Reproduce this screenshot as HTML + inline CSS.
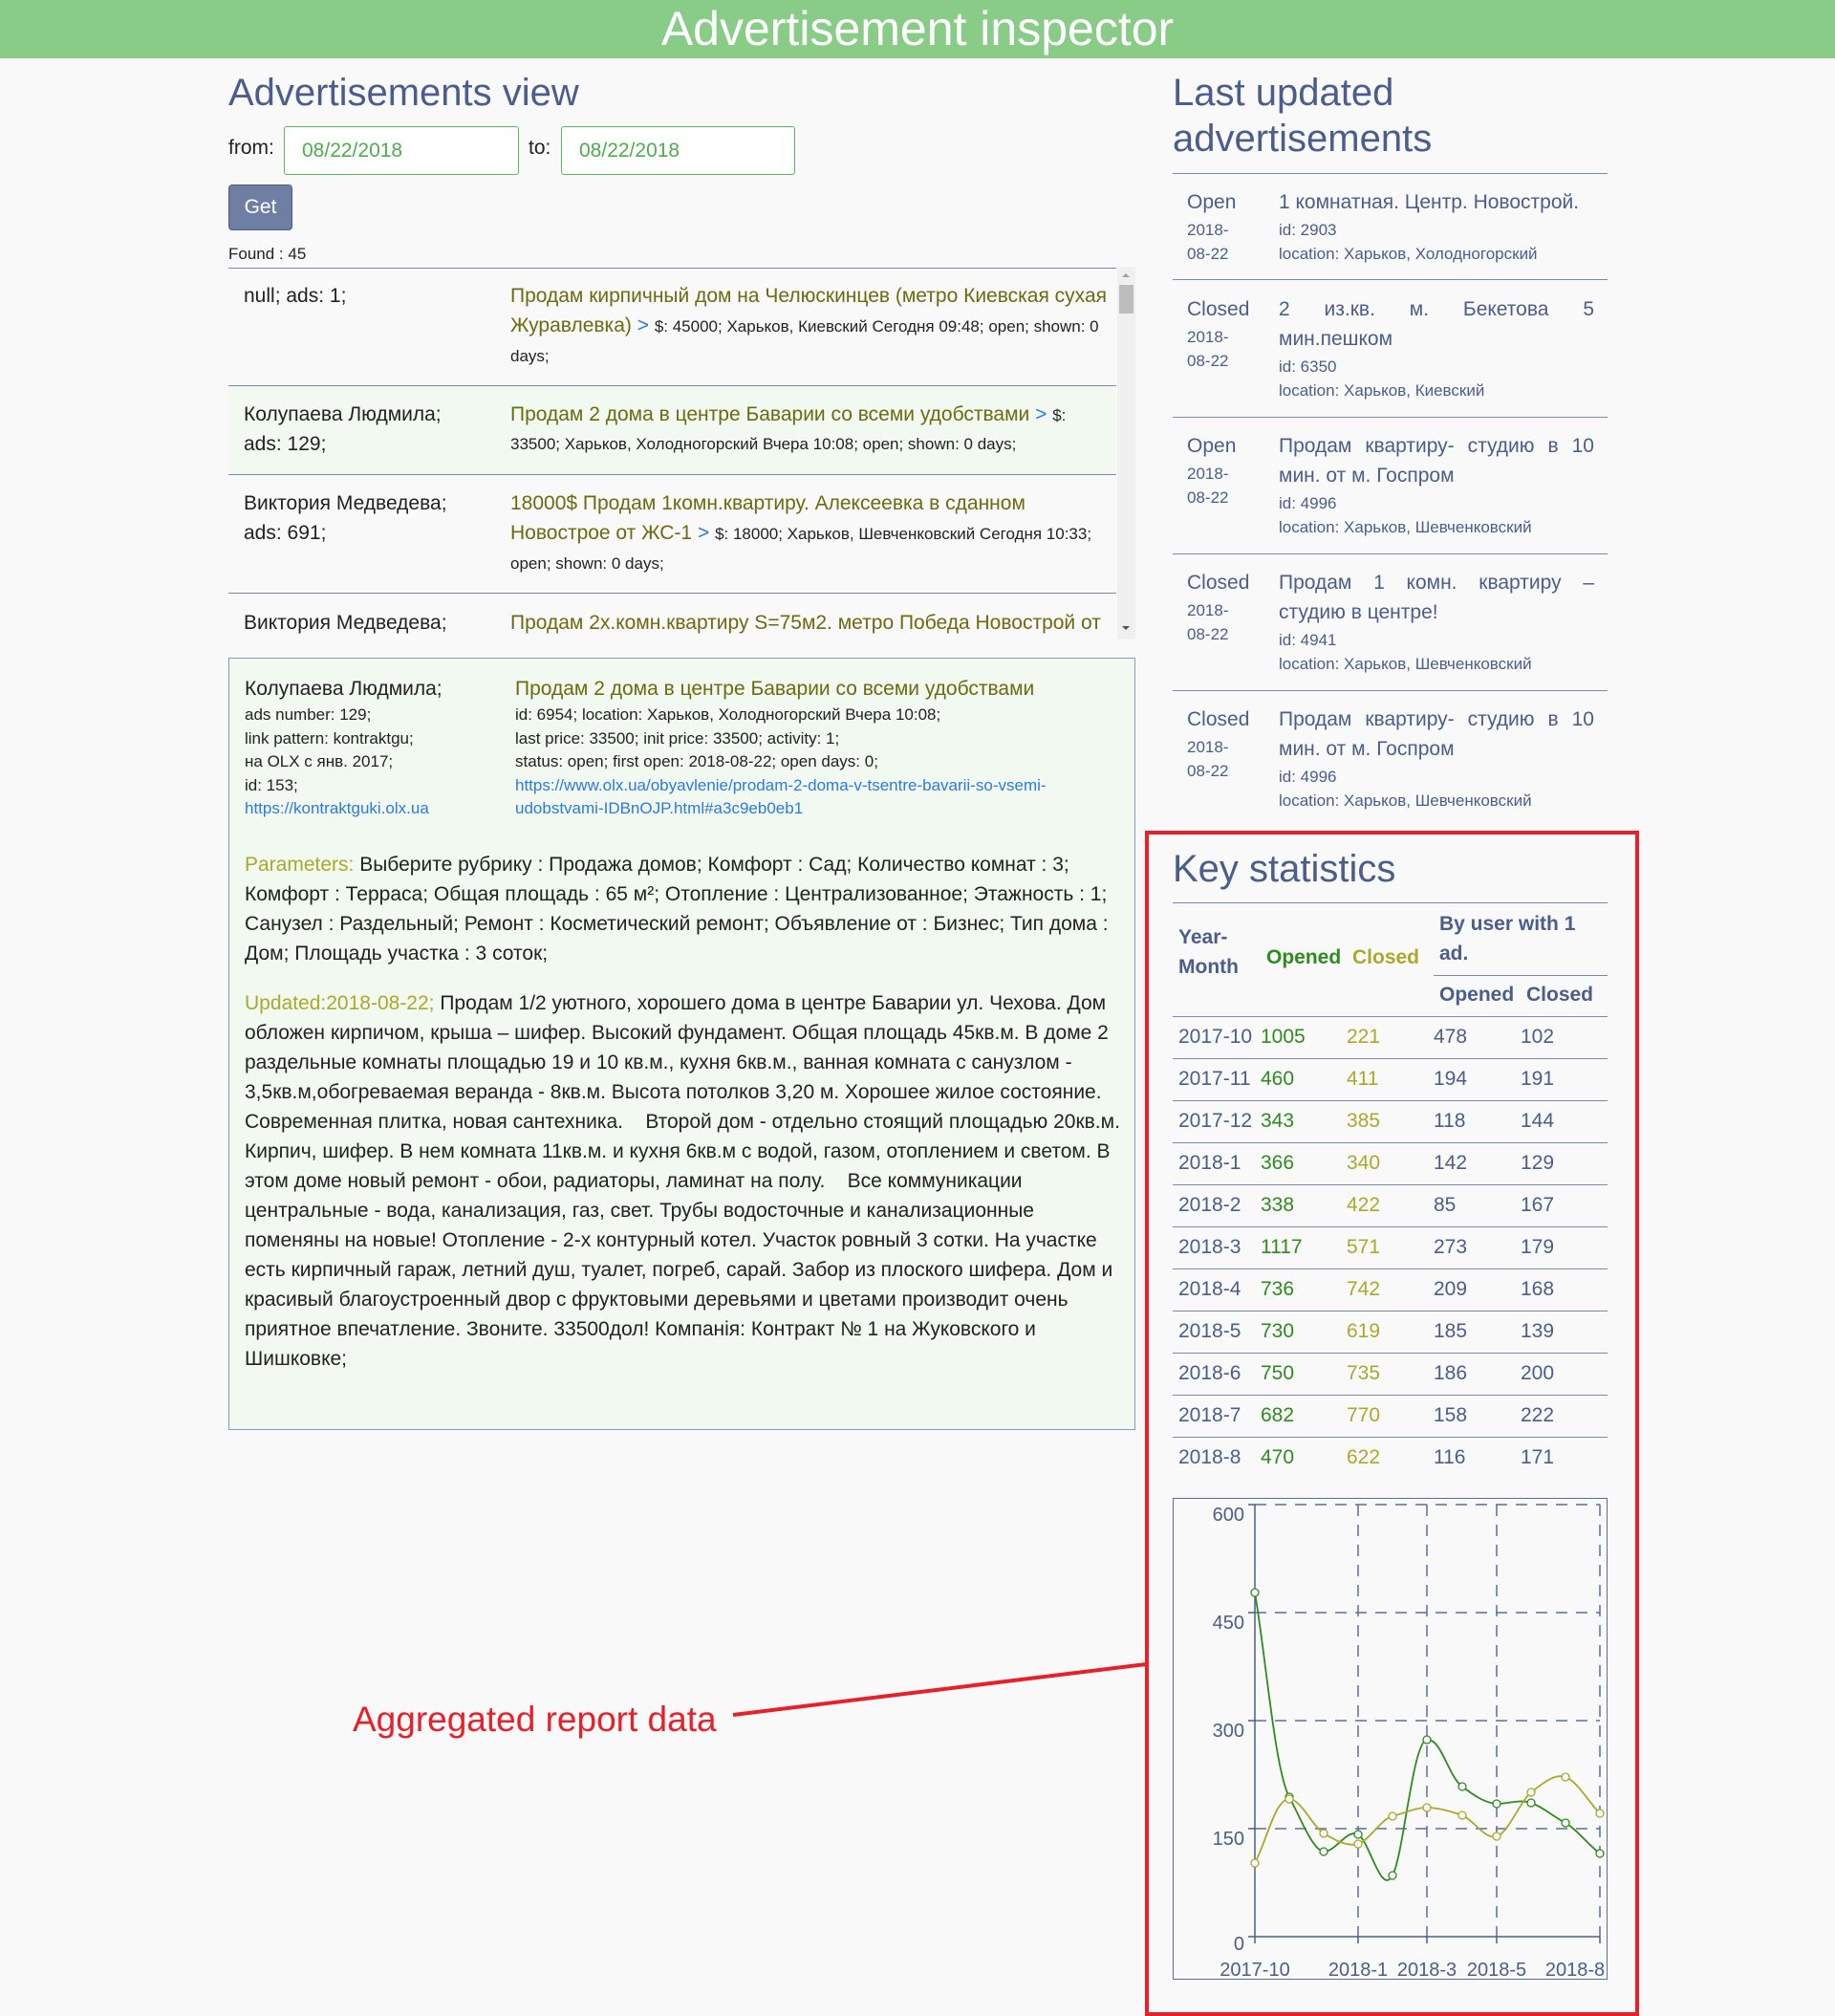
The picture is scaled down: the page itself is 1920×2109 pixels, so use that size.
<!DOCTYPE html>
<html><head><meta charset="utf-8">
<style>
*{margin:0;padding:0;box-sizing:border-box}
body{width:1920px;height:2092px;background:#f9f9f9;font-family:"Liberation Sans",Arial,sans-serif;color:#222;position:relative;overflow:hidden}
.a{position:absolute;white-space:nowrap}
.hdr{left:0;top:0;width:1920px;height:61px;background:#88cc88;color:#fff;font-size:50px;text-align:center;line-height:61px}
h2{position:absolute;font-weight:normal;color:#4b5d8c;font-size:40px;line-height:48px;white-space:nowrap}
.inp{position:absolute;border:1px solid #5cb85c;border-radius:3px;background:#fff;color:#4cae4c;font-size:21px;padding-left:18px;line-height:49px;height:51px}
.l{position:absolute;line-height:31px;font-size:21px;white-space:nowrap}
.s{font-size:17px}
.ol{color:#6b6b10}
.bl{color:#2a7ae2}
.hr{position:absolute;height:1px;background:#7b8bb0}
.rt{position:absolute;line-height:31px;font-size:21px;color:#4b5d8c;white-space:nowrap}
.rs{font-size:17px;line-height:25px}
.j{text-align:justify;text-align-last:justify;width:330px;white-space:normal}
.td{position:absolute;font-size:21px;color:#4b5d8c;line-height:44px;white-space:nowrap}
.g,.td.g,td.g{color:#2e8b1e}.y,.td.y,td.y{color:#a9a92a}
</style></head><body>
<div class="a hdr">Advertisement inspector</div>

<!-- left -->
<h2 style="left:239px;top:73px">Advertisements view</h2>
<div class="a" style="left:239px;top:143px;font-size:21px">from:</div>
<div class="inp" style="left:297px;top:132px;width:246px">08/22/2018</div>
<div class="a" style="left:553px;top:143px;font-size:21px">to:</div>
<div class="inp" style="left:587px;top:132px;width:245px">08/22/2018</div>
<div class="a" style="left:239px;top:193px;width:67px;height:48px;background:#6f7fa3;border:1px solid #4b5d8c;border-radius:4px;color:#fff;font-size:21px;text-align:center;line-height:46px">Get</div>
<div class="a" style="left:239px;top:256px;font-size:17px">Found : 45</div>

<div class="hr" style="left:239px;top:280px;width:929px"></div>
<div class="a" style="left:1169px;top:279px;width:19px;height:390px;background:#f0f0f0"></div>
<div class="a" style="left:1171px;top:298px;width:15px;height:30px;background:#bdbdbd"></div>
<div class="a" style="left:1174px;top:286px;width:0;height:0;border-left:4px solid transparent;border-right:4px solid transparent;border-bottom:4px solid #a0a0a0"></div>
<div class="a" style="left:1174px;top:655px;width:0;height:0;border-left:4px solid transparent;border-right:4px solid transparent;border-top:4px solid #505050"></div>

<div class="l" style="left:255px;top:294px">null; ads: 1;</div>
<div class="l ol" style="left:534px;top:294px">Продам кирпичный дом на Челюскинцев (метро Киевская сухая</div>
<div class="l" style="left:534px;top:325px"><span class="ol">Журавлевка)</span> <span class="bl">&gt;</span> <span class="s">$: 45000; Харьков, Киевский Сегодня 09:48; open; shown: 0</span></div>
<div class="l s" style="left:534px;top:357px">days;</div>
<div class="hr" style="left:239px;top:403px;width:929px"></div>

<div class="a" style="left:239px;top:404px;width:929px;height:92px;background:#f2f9f1"></div>
<div class="l" style="left:255px;top:418px">Колупаева Людмила;</div>
<div class="l" style="left:255px;top:449px">ads: 129;</div>
<div class="l" style="left:534px;top:418px"><span class="ol">Продам 2 дома в центре Баварии со всеми удобствами</span> <span class="bl">&gt;</span> <span class="s">$:</span></div>
<div class="l s" style="left:534px;top:449px">33500; Харьков, Холодногорский Вчера 10:08; open; shown: 0 days;</div>
<div class="hr" style="left:239px;top:496px;width:929px"></div>

<div class="l" style="left:255px;top:511px">Виктория Медведева;</div>
<div class="l" style="left:255px;top:542px">ads: 691;</div>
<div class="l ol" style="left:534px;top:511px">18000$ Продам 1комн.квартиру. Алексеевка в сданном</div>
<div class="l" style="left:534px;top:542px"><span class="ol">Новострое от ЖС-1</span> <span class="bl">&gt;</span> <span class="s">$: 18000; Харьков, Шевченковский Сегодня 10:33;</span></div>
<div class="l s" style="left:534px;top:574px">open; shown: 0 days;</div>
<div class="hr" style="left:239px;top:620px;width:929px"></div>
<div class="l" style="left:255px;top:636px">Виктория Медведева;</div>
<div class="l ol" style="left:534px;top:636px">Продам 2х.комн.квартиру S=75м2. метро Победа Новострой от</div>

<!-- detail -->
<div class="a" style="left:239px;top:688px;width:949px;height:808px;background:#f2f9f1;border:1px solid #8a98b8"></div>
<div class="l" style="left:256px;top:705px">Колупаева Людмила;</div>
<div class="l ol" style="left:539px;top:705px">Продам 2 дома в центре Баварии со всеми удобствами</div>
<div class="a s" style="left:256px;top:736px;line-height:24.6px">ads number: 129;<br>link pattern: kontraktgu;<br>на OLX с янв. 2017;<br>id: 153;<br><span class="bl">https://kontraktguki.olx.ua</span></div>
<div class="a s" style="left:539px;top:736px;line-height:24.6px">id: 6954; location: Харьков, Холодногорский Вчера 10:08;<br>last price: 33500; init price: 33500; activity: 1;<br>status: open; first open: 2018-08-22; open days: 0;<br><span class="bl">https://www.olx.ua/obyavlenie/prodam-2-doma-v-tsentre-bavarii-so-vsemi-<br>udobstvami-IDBnOJP.html#a3c9eb0eb1</span></div>
<div class="l" style="left:256px;top:889px;line-height:31px"><span class="y">Parameters:</span> Выберите рубрику : Продажа домов; Комфорт : Сад; Количество комнат : 3;<br>Комфорт : Терраса; Общая площадь : 65 м²; Отопление : Централизованное; Этажность : 1;<br>Санузел : Раздельный; Ремонт : Косметический ремонт; Объявление от : Бизнес; Тип дома :<br>Дом; Площадь участка : 3 соток;</div>
<div class="l" style="left:256px;top:1034px;line-height:31px"><span class="y">Updated:2018-08-22;</span> Продам 1/2 уютного, хорошего дома в центре Баварии ул. Чехова. Дом<br>обложен кирпичом, крыша – шифер. Высокий фундамент. Общая площадь 45кв.м. В доме 2<br>раздельные комнаты площадью 19 и 10 кв.м., кухня 6кв.м., ванная комната с санузлом -<br>3,5кв.м,обогреваемая веранда - 8кв.м. Высота потолков 3,20 м. Хорошее жилое состояние.<br>Современная плитка, новая сантехника. &nbsp;&nbsp;&nbsp;Второй дом - отдельно стоящий площадью 20кв.м.<br>Кирпич, шифер. В нем комната 11кв.м. и кухня 6кв.м с водой, газом, отоплением и светом. В<br>этом доме новый ремонт - обои, радиаторы, ламинат на полу. &nbsp;&nbsp;&nbsp;Все коммуникации<br>центральные - вода, канализация, газ, свет. Трубы водосточные и канализационные<br>поменяны на новые! Отопление - 2-х контурный котел. Участок ровный 3 сотки. На участке<br>есть кирпичный гараж, летний душ, туалет, погреб, сарай. Забор из плоского шифера. Дом и<br>красивый благоустроенный двор с фруктовыми деревьями и цветами производит очень<br>приятное впечатление. Звоните. 33500дол! Компанія: Контракт № 1 на Жуковского и<br>Шишковке;</div>

<!-- annotation -->
<div class="a" style="left:369px;top:1777px;font-size:37px;color:#e8202a;line-height:44px">Aggregated report data</div>
<svg class="a" style="left:0;top:0" width="1920" height="2092"><line x1="767" y1="1794" x2="1199" y2="1741" stroke="#e8202a" stroke-width="4"/></svg>

<!-- right top -->
<h2 style="left:1227px;top:73px;line-height:48px">Last updated<br>advertisements</h2>
<div class="hr" style="left:1227px;top:181px;width:455px"></div>

<div class="rt" style="left:1242px;top:196px">Open</div>
<div class="rt rs" style="left:1242px;top:228px">2018-<br>08-22</div>
<div class="rt" style="left:1338px;top:196px">1 комнатная. Центр. Новострой.</div>
<div class="rt rs" style="left:1338px;top:228px">id: 2903<br>location: Харьков, Холодногорский</div>
<div class="hr" style="left:1227px;top:292px;width:455px"></div>

<div class="rt" style="left:1242px;top:308px">Closed</div>
<div class="rt rs" style="left:1242px;top:340px">2018-<br>08-22</div>
<div class="rt j" style="left:1338px;top:308px">2 из.кв. м. Бекетова 5</div>
<div class="rt" style="left:1338px;top:339px">мин.пешком</div>
<div class="rt rs" style="left:1338px;top:371px">id: 6350<br>location: Харьков, Киевский</div>
<div class="hr" style="left:1227px;top:436px;width:455px"></div>

<div class="rt" style="left:1242px;top:451px">Open</div>
<div class="rt rs" style="left:1242px;top:483px">2018-<br>08-22</div>
<div class="rt j" style="left:1338px;top:451px">Продам квартиру- студию в 10</div>
<div class="rt" style="left:1338px;top:482px">мин. от м. Госпром</div>
<div class="rt rs" style="left:1338px;top:514px">id: 4996<br>location: Харьков, Шевченковский</div>
<div class="hr" style="left:1227px;top:579px;width:455px"></div>

<div class="rt" style="left:1242px;top:594px">Closed</div>
<div class="rt rs" style="left:1242px;top:626px">2018-<br>08-22</div>
<div class="rt j" style="left:1338px;top:594px">Продам 1 комн. квартиру –</div>
<div class="rt" style="left:1338px;top:625px">студию в центре!</div>
<div class="rt rs" style="left:1338px;top:657px">id: 4941<br>location: Харьков, Шевченковский</div>
<div class="hr" style="left:1227px;top:722px;width:455px"></div>

<div class="rt" style="left:1242px;top:737px">Closed</div>
<div class="rt rs" style="left:1242px;top:769px">2018-<br>08-22</div>
<div class="rt j" style="left:1338px;top:737px">Продам квартиру- студию в 10</div>
<div class="rt" style="left:1338px;top:768px">мин. от м. Госпром</div>
<div class="rt rs" style="left:1338px;top:800px">id: 4996<br>location: Харьков, Шевченковский</div>

<!-- key stats -->
<div class="a" style="left:1198px;top:869px;width:517px;height:1240px;border:4px solid #e8202a"></div>
<h2 style="left:1227px;top:885px">Key statistics</h2>
<div class="hr" style="left:1227px;top:944px;width:455px"></div>
<div class="td" style="left:1233px;top:965px;line-height:31px;font-weight:bold">Year-<br>Month</div>
<div class="td g" style="left:1325px;top:980px;font-weight:bold">Opened</div>
<div class="td y" style="left:1415px;top:980px;font-weight:bold">Closed</div>
<div class="td" style="left:1506px;top:951px;line-height:31px;font-weight:bold">By user with 1<br>ad.</div>
<div class="hr" style="left:1500px;top:1020px;width:182px"></div>
<div class="td" style="left:1506px;top:1019px;font-weight:bold">Opened</div>
<div class="td" style="left:1597px;top:1019px;font-weight:bold">Closed</div>
<div class="hr" style="left:1227px;top:1063px;width:455px"></div>

<div class="a" style="left:1227px;top:1063px;width:455px">
<table style="border-collapse:collapse;width:455px;font-size:21px;color:#4b5d8c">
<colgroup><col style="width:92px"><col style="width:90px"><col style="width:91px"><col style="width:91px"><col></colgroup>
<tr style="height:44px;border-bottom:1px solid #7b8bb0"><td style="padding-left:6px">2017-10</td><td class="g">1005</td><td class="y">221</td><td>478</td><td>102</td></tr>
<tr style="height:44px;border-bottom:1px solid #7b8bb0"><td style="padding-left:6px">2017-11</td><td class="g">460</td><td class="y">411</td><td>194</td><td>191</td></tr>
<tr style="height:44px;border-bottom:1px solid #7b8bb0"><td style="padding-left:6px">2017-12</td><td class="g">343</td><td class="y">385</td><td>118</td><td>144</td></tr>
<tr style="height:44px;border-bottom:1px solid #7b8bb0"><td style="padding-left:6px">2018-1</td><td class="g">366</td><td class="y">340</td><td>142</td><td>129</td></tr>
<tr style="height:44px;border-bottom:1px solid #7b8bb0"><td style="padding-left:6px">2018-2</td><td class="g">338</td><td class="y">422</td><td>85</td><td>167</td></tr>
<tr style="height:44px;border-bottom:1px solid #7b8bb0"><td style="padding-left:6px">2018-3</td><td class="g">1117</td><td class="y">571</td><td>273</td><td>179</td></tr>
<tr style="height:44px;border-bottom:1px solid #7b8bb0"><td style="padding-left:6px">2018-4</td><td class="g">736</td><td class="y">742</td><td>209</td><td>168</td></tr>
<tr style="height:44px;border-bottom:1px solid #7b8bb0"><td style="padding-left:6px">2018-5</td><td class="g">730</td><td class="y">619</td><td>185</td><td>139</td></tr>
<tr style="height:44px;border-bottom:1px solid #7b8bb0"><td style="padding-left:6px">2018-6</td><td class="g">750</td><td class="y">735</td><td>186</td><td>200</td></tr>
<tr style="height:44px;border-bottom:1px solid #7b8bb0"><td style="padding-left:6px">2018-7</td><td class="g">682</td><td class="y">770</td><td>158</td><td>222</td></tr>
<tr style="height:44px"><td style="padding-left:6px">2018-8</td><td class="g">470</td><td class="y">622</td><td>116</td><td>171</td></tr>
</table></div>

<!-- chart -->
<svg class="a" style="left:0;top:0" width="1920" height="2092" font-family="Liberation Sans, Arial, sans-serif">
<rect x="1227.5" y="1567.5" width="454" height="503" fill="none" stroke="#5a6d9c" stroke-width="1"/>
<g stroke="#5a6d9c" stroke-width="1.5" stroke-dasharray="12,9" fill="none">
<line x1="1313" y1="1574" x2="1674" y2="1574"/>
<line x1="1313" y1="1687" x2="1674" y2="1687"/>
<line x1="1313" y1="1800" x2="1674" y2="1800"/>
<line x1="1313" y1="1913" x2="1674" y2="1913"/>
<line x1="1421" y1="1574" x2="1421" y2="2026"/>
<line x1="1493" y1="1574" x2="1493" y2="2026"/>
<line x1="1566" y1="1574" x2="1566" y2="2026"/>
<line x1="1674" y1="1574" x2="1674" y2="2026"/>
</g>
<g stroke="#4b5d8c" stroke-width="1.5">
<line x1="1313" y1="1574" x2="1313" y2="2033"/>
<line x1="1306" y1="2026" x2="1674" y2="2026"/>
<line x1="1306" y1="1574" x2="1313" y2="1574"/><line x1="1306" y1="1687" x2="1313" y2="1687"/><line x1="1306" y1="1800" x2="1313" y2="1800"/><line x1="1306" y1="1913" x2="1313" y2="1913"/>
<line x1="1421" y1="2026" x2="1421" y2="2033"/><line x1="1493" y1="2026" x2="1493" y2="2033"/><line x1="1566" y1="2026" x2="1566" y2="2033"/><line x1="1674" y1="2026" x2="1674" y2="2033"/>
</g>
<g fill="#4b5d8c" font-size="20" text-anchor="end">
<text x="1302" y="1591">600</text><text x="1302" y="1704">450</text><text x="1302" y="1817">300</text><text x="1302" y="1930">150</text><text x="1302" y="2040">0</text>
</g>
<g fill="#4b5d8c" font-size="20" text-anchor="middle">
<text x="1313" y="2067">2017-10</text><text x="1421" y="2067">2018-1</text><text x="1493" y="2067">2018-3</text><text x="1566" y="2067">2018-5</text><text x="1648" y="2067">2018-8</text>
</g>
<path fill="none" stroke="#2e8b1e" stroke-width="1.8" d="M1313,1666 C1325,1737 1334,1852 1349,1880 C1361,1902 1373,1935 1385,1937 C1397,1938 1409,1913 1421,1919 C1433,1926 1445,1984 1457,1962 C1469,1939 1478,1822 1493,1820 C1508,1818 1515,1858 1530,1869 C1542,1878 1553,1886 1566,1887 C1578,1887 1590,1882 1602,1886 C1614,1890 1626,1901 1638,1907 C1650,1914 1662,1930 1674,1939"/>
<path fill="none" stroke="#a9a92a" stroke-width="1.8" d="M1313,1949 C1325,1927 1334,1882 1349,1882 C1361,1882 1373,1910 1385,1918 C1397,1925 1409,1932 1421,1929 C1433,1925 1445,1903 1457,1900 C1469,1897 1481,1891 1493,1891 C1505,1891 1518,1895 1530,1899 C1542,1904 1554,1925 1566,1921 C1578,1918 1590,1885 1602,1875 C1614,1866 1626,1855 1638,1859 C1650,1863 1662,1885 1674,1897"/>
<g fill="#f9f9f9" stroke="#2e8b1e" stroke-width="1.3">
<circle cx="1313" cy="1666" r="4"/><circle cx="1349" cy="1880" r="4"/><circle cx="1385" cy="1937" r="4"/><circle cx="1421" cy="1919" r="4"/><circle cx="1457" cy="1962" r="4"/><circle cx="1493" cy="1820" r="4"/><circle cx="1530" cy="1869" r="4"/><circle cx="1566" cy="1887" r="4"/><circle cx="1602" cy="1886" r="4"/><circle cx="1638" cy="1907" r="4"/><circle cx="1674" cy="1939" r="4"/>
</g>
<g fill="#f9f9f9" stroke="#a9a92a" stroke-width="1.3">
<circle cx="1313" cy="1949" r="4"/><circle cx="1349" cy="1882" r="4"/><circle cx="1385" cy="1918" r="4"/><circle cx="1421" cy="1929" r="4"/><circle cx="1457" cy="1900" r="4"/><circle cx="1493" cy="1891" r="4"/><circle cx="1530" cy="1899" r="4"/><circle cx="1566" cy="1921" r="4"/><circle cx="1602" cy="1875" r="4"/><circle cx="1638" cy="1859" r="4"/><circle cx="1674" cy="1897" r="4"/>
</g>
</svg>
</body></html>
